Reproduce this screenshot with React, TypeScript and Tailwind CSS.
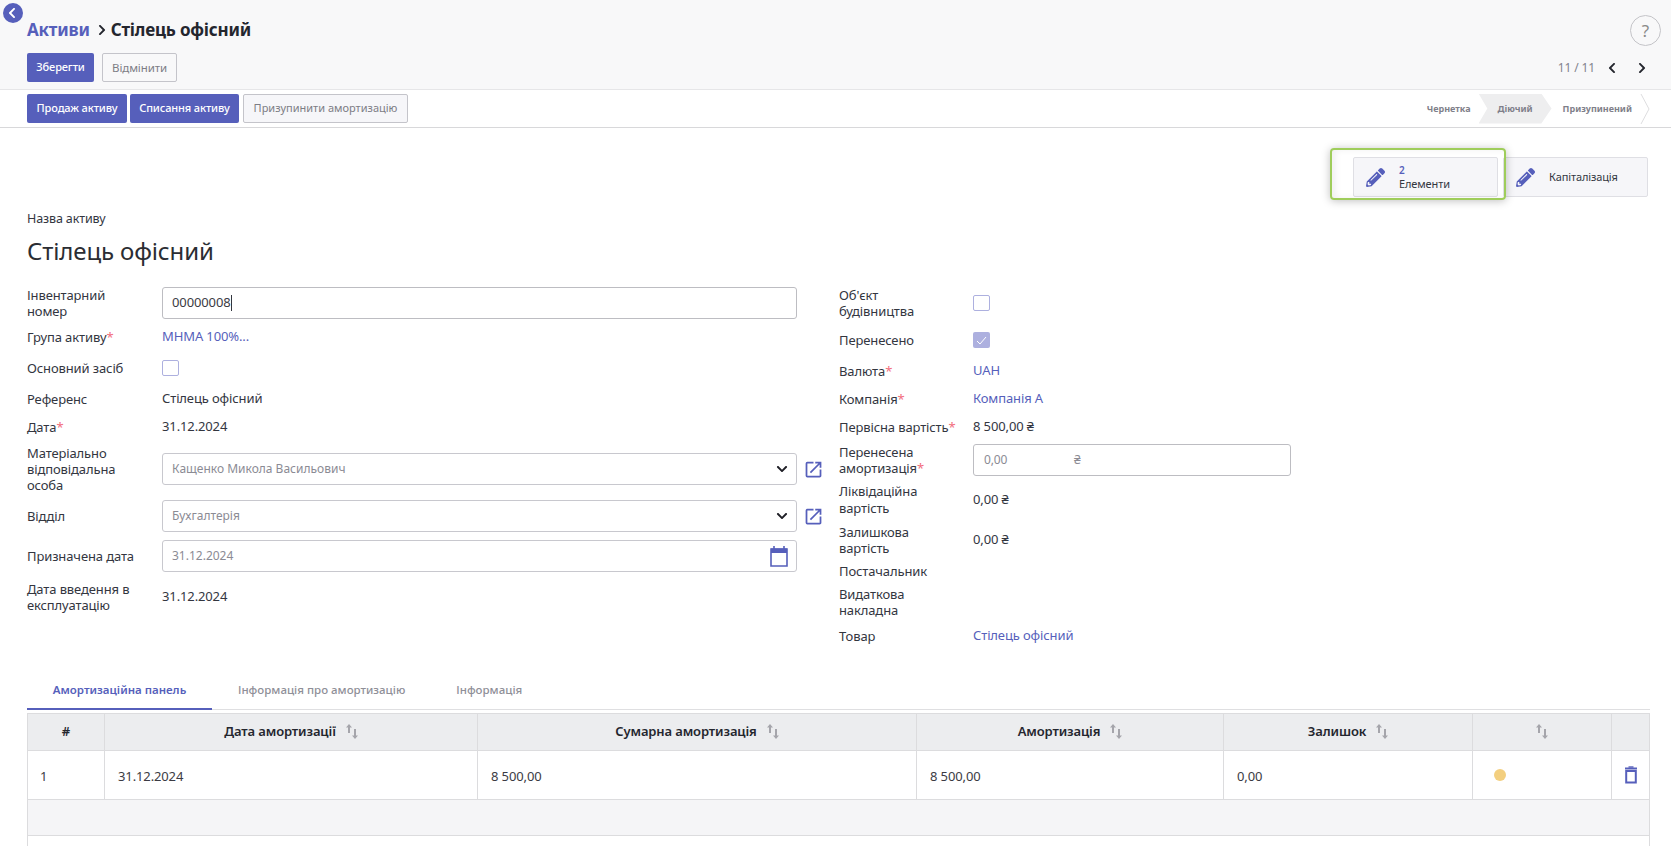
import React from "react";
import { FaChevronLeft, FaChevronRight, FaChevronDown, FaPencilAlt } from "react-icons/fa";
import { MdOpenInNew } from "react-icons/md";

const SortIcon = () => (
  <svg width="12" height="16" viewBox="0 0 12 16" className="text-[#a5a5ab]" fill="currentColor">
    <path d="M3 0 L6 3.5 H4 V9 H2 V3.5 H0 Z" />
    <path d="M9 15 L12 11.5 H10 V5 H8 V11.5 H6 Z" />
  </svg>
);

const TrashIcon = () => (
  <svg width="14" height="18" viewBox="0 0 14 18" fill="none" className="text-[#565fbb]">
    <path d="M1 2.5 H13" stroke="currentColor" strokeWidth="2" />
    <path d="M4.5 1 H9.5" stroke="currentColor" strokeWidth="1.4" />
    <path d="M2.2 5 H11.8 V16.5 H2.2 Z" stroke="currentColor" strokeWidth="2" />
  </svg>
);

const CalendarIcon = () => (
  <svg width="18" height="21" viewBox="0 0 18 21" fill="none" className="text-[#565fbb]">
    <path d="M1 3 H17 V20 H1 Z" stroke="currentColor" strokeWidth="1.6" />
    <path d="M1 2.5 H17 V7 H1 Z" fill="currentColor" />
    <path d="M4 0 V3 M14 0 V3" stroke="currentColor" strokeWidth="1.6" />
  </svg>
);

const Req = () => <span className="text-[#f26d7d]">*</span>;

const Label = ({ children }: { children: React.ReactNode }) => (
  <div className="leading-4 text-[#33363f]">{children}</div>
);

const Checkbox = ({ checked }: { checked?: boolean }) =>
  checked ? (
    <div className="w-[17px] h-4 rounded-[2px] bg-[#adb0df] flex items-center justify-center">
      <svg width="11" height="9" viewBox="0 0 11 9" fill="none">
        <path d="M1 5 L4 8 L10 1" stroke="white" strokeWidth="1" />
      </svg>
    </div>
  ) : (
    <div className="w-[17px] h-4 rounded-[2px] border border-[#adb0df] bg-white" />
  );

const FieldBox = ({ text, icon, wide }: { text: string; icon?: React.ReactNode; wide?: boolean }) => (
  <div className={`h-full flex items-center justify-between rounded-[3px] border border-[#c8c8ce] bg-white pl-[9px] pr-[8px] text-[12px] tracking-normal text-[#8b8b94] ${wide ? "w-[635px]" : "w-full"}`}>
    <span>{text}</span>
    {icon}
  </div>
);

const SelectRow = ({ text }: { text: string }) => (
  <div className="flex items-center h-full">
    <FieldBox wide text={text} icon={<FaChevronDown size={12} className="text-[#1f1f26]" />} />
    <MdOpenInNew size={21} className="ml-[6px] text-[#565fbb]" />
  </div>
);

const leftRows: { cls: string; label: React.ReactNode; value: React.ReactNode }[] = [
  {
    cls: "h-8",
    label: <>Інвентарний<br />номер</>,
    value: (
      <div className="h-full w-[635px] flex items-center rounded-[3px] border border-[#bdbdc2] bg-white pl-[9px] text-[#3b3b43]">
        00000008<span className="w-px h-4 bg-[#33363f]" />
      </div>
    ),
  },
  { cls: "h-[30px] mt-[3px]", label: <>Група активу<Req /></>, value: <span className="text-[#565fbb]">МНМА 100%...</span> },
  { cls: "h-[30px] mt-px", label: "Основний засіб", value: <Checkbox /> },
  { cls: "h-[30px] mt-px", label: "Референс", value: "Стілець офісний" },
  { cls: "h-[26px]", label: <>Дата<Req /></>, value: "31.12.2024" },
  { cls: "h-8 mt-[13px] ", label: <span className="block">Матеріально<br />відповідальна<br />особа</span>, value: <SelectRow text="Кащенко Микола Васильович" /> },
  { cls: "h-8 mt-[15px]", label: "Відділ", value: <SelectRow text="Бухгалтерія" /> },
  { cls: "h-8 mt-2", label: "Призначена дата", value: <div className="w-[635px] h-full"><FieldBox text="31.12.2024" icon={<CalendarIcon />} /></div> },
  { cls: "h-[34px] mt-2", label: <>Дата введення в<br />експлуатацію</>, value: "31.12.2024" },
];

const rightRows: { cls: string; label: React.ReactNode; value?: React.ReactNode }[] = [
  { cls: "h-8", label: <>Об'єкт<br />будівництва</>, value: <Checkbox /> },
  { cls: "h-[30px] mt-[6px]", label: "Перенесено", value: <Checkbox checked /> },
  { cls: "h-[30px] mt-px", label: <>Валюта<Req /></>, value: <span className="text-[#565fbb]">UAH</span> },
  { cls: "h-[26px]", label: <>Компанія<Req /></>, value: <span className="text-[#565fbb]">Компанія А</span> },
  { cls: "h-[28px] mt-px", label: <>Первісна вартість<Req /></>, value: "8 500,00 ₴" },
  {
    cls: "h-8 mt-[3px]",
    label: <>Перенесена<br />амортизація<Req /></>,
    value: (
      <div className="w-[318px] h-full flex items-center rounded-[3px] border border-[#bdbdc2] bg-white pl-[10px] text-[12px] text-[#8b8b94]">
        <span className="w-[90px]">0,00</span>₴
      </div>
    ),
  },
  { cls: "h-[34px] mt-[7px]", label: <span className="block leading-[17px]">Ліквідаційна<br />вартість</span>, value: "0,00 ₴" },
  { cls: "h-[34px] mt-[6px]", label: <>Залишкова<br />вартість</>, value: "0,00 ₴" },
  { cls: "h-[22px] mt-[3px]", label: "Постачальник" },
  { cls: "h-8 mt-[4px]", label: <>Видаткова<br />накладна</> },
  { cls: "h-[22px] mt-[7px]", label: "Товар", value: <span className="text-[#565fbb]">Стілець офісний</span> },
];

const columns = [
  { title: "#", cls: "w-[77px]" },
  { title: "Дата амортизації", cls: "w-[373px]", sort: true },
  { title: "Сумарна амортизація", cls: "w-[439px]", sort: true },
  { title: "Амортизація", cls: "w-[307px]", sort: true },
  { title: "Залишок", cls: "w-[249px]", sort: true },
  { title: "", cls: "w-[139px]", sort: true },
  { title: "", cls: "flex-1" },
];

const cells = [
  { text: "1", cls: "w-[77px] pl-3" },
  { text: "31.12.2024", cls: "w-[373px] pl-[13px]" },
  { text: "8 500,00", cls: "w-[439px] pl-[13px]" },
  { text: "8 500,00", cls: "w-[307px] pl-[13px]" },
  { text: "0,00", cls: "w-[249px] pl-[13px]" },
];

export default function App() {
  return (
    <div className="relative h-[846px] w-full overflow-hidden bg-white font-['Noto_Sans',sans-serif] text-[13px] tracking-[-0.12px] text-[#33363f]">
      {/* back button */}
      <div className="absolute left-[3px] top-[3px] w-5 h-5 rounded-full bg-[#565fbb] flex items-center justify-center">
        <FaChevronLeft size={12} className="text-white mr-[2px]" />
      </div>

      {/* top bar */}
      <div className="h-[90px] bg-[#f8f8f9] border-b border-[#e6e6e8] pl-[27px] pr-[23px] flex justify-between">
        <div>
          <div className="flex items-center h-[30px] mt-[15px] text-[17px] font-bold tracking-[-0.2px] leading-[30px]">
            <span className="text-[#565fbb]">Активи</span>
            <FaChevronRight size={12} className="ml-[6px] mr-[3px] text-[#24262e]" />
            <span className="text-[#24262e]">Стілець офісний</span>
          </div>
          <div className="flex gap-2 mt-2">
            <button className="h-[29px] w-[67px] rounded-[2px] bg-[#565fbb] text-white text-[11px] font-medium">Зберегти</button>
            <button className="h-[29px] w-[75px] rounded-[2px] border border-[#c4c4ca] bg-[#f8f8f9] text-[11.5px] text-[#7d7d85]">Відмінити</button>
          </div>
        </div>
        <div className="flex flex-col items-end">
          <div className="mt-[15px] mr-[-13px] w-[31px] h-[31px] rounded-full border border-[#c4c4c8] text-[#8a8a8a] text-[17px] flex items-center justify-center">?</div>
          <div className="flex items-center mt-[13px] text-[12px] text-[#83838d]">
            <span>11 / 11</span>
            <FaChevronLeft size={12} className="ml-[11px] text-[#24262e]" />
            <FaChevronRight size={12} className="ml-[18px] text-[#24262e]" />
          </div>
        </div>
      </div>

      {/* action bar */}
      <div className="h-[38px] border-b border-[#d8d8da] pl-[27px] flex items-center justify-between">
        <div className="flex gap-[3px] text-[11px]">
          <button className="h-[29px] w-[100px] rounded-[2px] bg-[#565fbb] text-white font-medium">Продаж активу</button>
          <button className="h-[29px] w-[109px] rounded-[2px] bg-[#565fbb] text-white font-medium">Списання активу</button>
          <button className="h-[29px] w-[165px] ml-[1px] rounded-[2px] border border-[#c4c4ca] bg-[#f6f6f9] tracking-normal text-[#7d7d85]">Призупинити амортизацію</button>
        </div>
        <div className="flex items-center h-[30px] pr-[21px] text-[9px] font-bold tracking-normal text-[#7f7f8a]">
          <span>Чернетка</span>
          <div className="ml-2 w-[73px] h-[30px] bg-[#eeeeef] flex items-center justify-center [clip-path:polygon(0_0,86%_0,100%_50%,86%_100%,0_100%,12%_50%)]">Діючий</div>
          <span className="ml-[11px]">Призупинений</span>
          <svg width="10" height="30" viewBox="0 0 10 30" fill="none" className="ml-2 text-[#dddddf]">
            <path d="M1 0 L9 15 L1 30" stroke="currentColor" />
          </svg>
        </div>
      </div>

      {/* stat buttons */}
      <div className="relative flex justify-end gap-[5px] pt-[29px] pr-[23px]">
        <div className="w-[145px] h-10 rounded-[2px] border border-[#dfdfe4] bg-[#f6f6f9] flex items-center pl-[12px]">
          <FaPencilAlt size={19} className="text-[#565fbb]" />
          <div className="ml-[14px] text-[11px] leading-[14px]">
            <div className="text-[#565fbb] text-[10px] font-semibold">2</div>
            <div className="text-[#33363f]">Елементи</div>
          </div>
        </div>
        <div className="w-[145px] h-10 rounded-[2px] border border-[#dfdfe4] bg-[#f6f6f9] flex items-center pl-[12px]">
          <FaPencilAlt size={19} className="text-[#565fbb]" />
          <div className="ml-[14px] text-[11px] text-[#33363f]">Капіталізація</div>
        </div>
        <div className="absolute left-[1330px] top-[20px] w-[176px] h-[52px] rounded-[4px] border-2 border-[#9fcd5b] shadow-[0_1px_8px_rgba(0,0,0,0.25),inset_4px_0_6px_rgba(0,0,0,0.06)]" />
      </div>

      {/* form */}
      <div className="px-[27px]">
        <div className="mt-[13px] h-[18px] leading-[18px] text-[12.5px]">Назва активу</div>
        <div className="mt-[6px] h-[34px] leading-[34px] text-[24px] text-[#2b2d33]">Стілець офісний</div>

        <div className="flex mt-[19px]">
          <div className="w-[812px]">
            {leftRows.map((row, i) => (
              <div key={i} className={`flex items-center ${row.cls}`}>
                <div className="w-[135px] shrink-0"><Label>{row.label}</Label></div>
                <div className="flex-1 h-full flex items-center">{row.value}</div>
              </div>
            ))}
          </div>
          <div className="w-[452px]">
            {rightRows.map((row, i) => (
              <div key={i} className={`flex items-center ${row.cls}`}>
                <div className="w-[134px] shrink-0"><Label>{row.label}</Label></div>
                <div className="flex-1 h-full flex items-center">{row.value}</div>
              </div>
            ))}
          </div>
        </div>

        {/* tabs */}
        <div className="flex h-[43px] w-[1623px] mt-5 border-b border-[#dfdfe1] text-[11.5px] font-medium tracking-normal text-[#8f8f98]">
          <div className="w-[185px] h-[43px] border-b-2 border-[#565fbb] text-center leading-[46px] font-semibold text-[#565fbb]">Амортизаційна панель</div>
          <div className="ml-[26px] leading-[46px]">Інформація про амортизацію</div>
          <div className="ml-[51px] leading-[46px]">Інформація</div>
        </div>

        {/* table */}
        <div className="w-[1623px] mt-[3px] border-l border-r border-[#dcdcde]">
          <div className="flex h-[38px] bg-[#ecedef] border-t border-b border-[#dcdcde] font-semibold text-[#24262e]">
            {columns.map((col, i) => (
              <div key={i} className={`flex items-center justify-center gap-[10px] border-r border-[#dcdcde] last:border-r-0 ${col.cls}`}>
                {col.title && <span>{col.title}</span>}
                {col.sort && <SortIcon />}
              </div>
            ))}
          </div>
          <div className="flex h-[49px] border-b border-[#dcdcde] text-[#3b3b43]">
            {cells.map((cell, i) => (
              <div key={i} className={`flex items-center pt-1 border-r border-[#dcdcde] ${cell.cls}`}>{cell.text}</div>
            ))}
            <div className="w-[139px] border-r border-[#dcdcde] flex items-center pl-[21px]">
              <div className="w-3 h-3 rounded-full bg-[#f3cf7f]" />
            </div>
            <div className="flex-1 flex items-center justify-center"><TrashIcon /></div>
          </div>
          <div className="h-9 bg-[#f5f5f7] border-b border-[#dcdcde]" />
          <div className="h-4" />
        </div>
      </div>
    </div>
  );
}
